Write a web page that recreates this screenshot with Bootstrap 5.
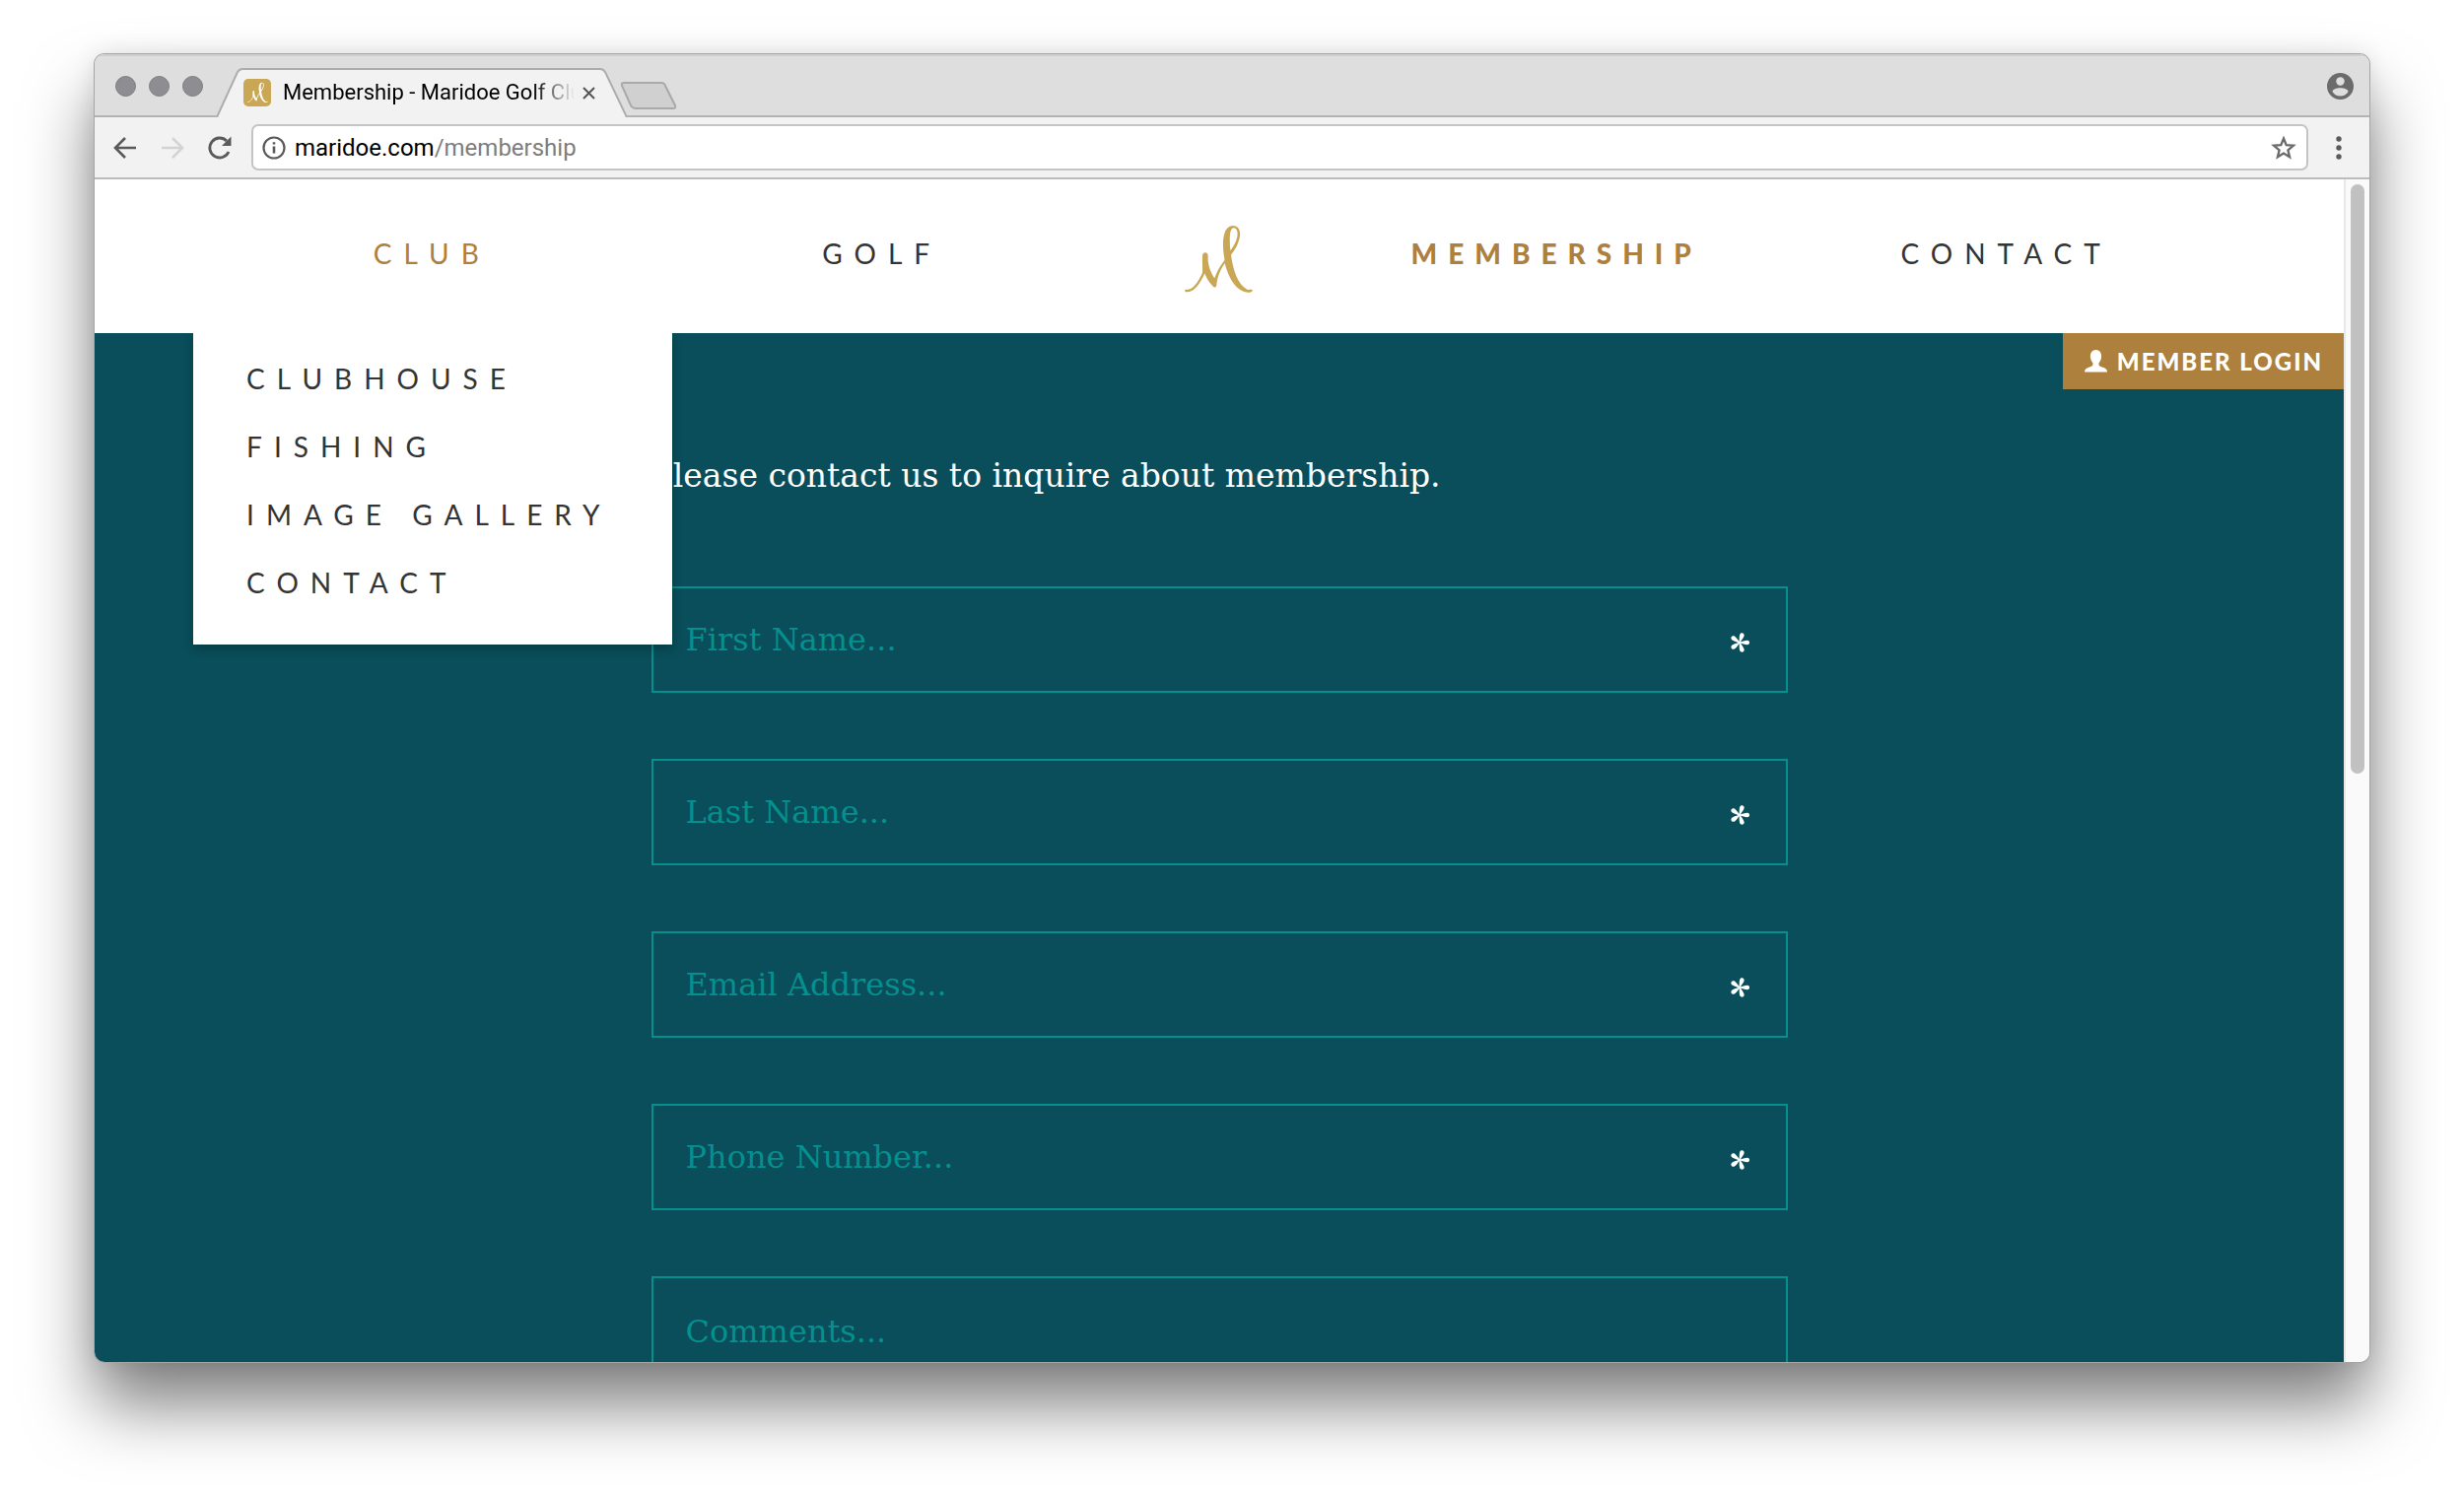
<!DOCTYPE html>
<html lang="en">
<head>
<meta charset="utf-8">
<meta name="viewport" content="width=device-width, initial-scale=1">
<title>Membership - Maridoe Golf Club</title>
<link href="https://cdn.jsdelivr.net/npm/bootstrap@5.3.0/dist/css/bootstrap.min.css" rel="stylesheet">
<style>
  :root { --teal: #094e5a; --aqua: #058f8e; --bronze: #ad803e; --gold: #c9a755; --ink: #333434; }
  body { height: 100vh; padding: 55px 96px 137px; background: #fff; overflow: hidden; }
  .window { border-radius: 10px; overflow: hidden; background: #fff;
    box-shadow: 0 0 0 1px #a6a6a6, 0 44px 68px rgba(0,0,0,.5), 0 0 24px rgba(0,0,0,.1); }
  button { border: 0; background: none; padding: 0; line-height: 0; }
  svg { display: block; }

  /* tab strip */
  .tabstrip { height: 64px; background: #dedede; border-bottom: 2px solid #b3b3b3; padding: 0 16px 0 21px; box-shadow: inset 0 2px 0 #cfcfcf; }
  .lights { gap: 13px; height: 65px; }
  .light { width: 21px; height: 21px; border-radius: 50%; background: #8e8d92; border: 1px solid #7d7c80; }
  .tab-item { width: 416px; height: 50px; margin: 14px 0 0 14px; padding: 0 28px 0 27px; color: #000; text-decoration: none; font: 22px/30px Roboto, sans-serif; }
  .tab-shape { inset: 0; width: 100%; height: 100%; }
  .tab-title { width: 304px; overflow: hidden; white-space: nowrap; -webkit-mask-image: linear-gradient(90deg,#000 86%,transparent); mask-image: linear-gradient(90deg,#000 86%,transparent); }
  .favicon { width: 28px; height: 28px; border-radius: 5px; background: var(--gold); }
  .new-tab { margin: 27px 0 0 -8px; }
  .profile { height: 65px; }

  /* toolbar */
  .toolbar { height: 63px; background: #f2f2f2; border-bottom: 2px solid #bcbcbc; padding: 0 20px 0 18px; }
  .tools { gap: 22px; width: 141px; }
  .address { height: 47px; border: 2px solid #c4c4c4; border-radius: 7px; background: #fff; padding: 0 10px 0 8px; font: 24px/30px Roboto, sans-serif; color: #000; }
  .address-path { color: #7d7d7d; }
  .menu-dots { margin-left: 20px; }

  /* site header */
  .scroll-rail { width: 26px; border-left: 2px solid #e8e8e8; background: #fafafa; padding: 5px 5px 0; }
  .scroll-thumb { height: 50%; border-radius: 7px; background: #c1c1c1; }
  .site-nav { height: 156px; padding: 0 5%; background: #fff; }
  .nav-cell { flex: 0 0 22.222%; height: 100%; }
  .logo-cell { flex: 0 0 11.111%; height: 100%; padding-top: 46px; color: var(--gold); }
  .wide-caps { font: 28px/69px Lato, sans-serif; letter-spacing: 12px; color: var(--ink); text-decoration: none; white-space: nowrap; text-transform: uppercase; }
  .wide-caps:hover { color: var(--bronze); }
  .top-link { display: block; padding-top: 41px; text-align: center; }
  .is-open { color: var(--bronze); }
  .is-current { color: var(--bronze); font-weight: 900; letter-spacing: 11px; }
  .submenu { top: 100%; left: -14px; right: -16px; z-index: 5; background: #fff; padding: 12px 0 28px 54px; box-shadow: 0 4px 10px rgba(0,0,0,.25); clip-path: inset(0 -20px -20px -20px); }

  /* page body */
  .site-body { background: var(--teal); font-family: "DejaVu Serif", serif; }
  .login-link { top: 0; right: 0; height: 57px; padding: 0 21px 0 22px; gap: 10px; background: var(--bronze); color: #fff; text-decoration: none; font: 900 24px/30px Lato, sans-serif; letter-spacing: 2px; }
  .inquiry { width: calc(50% + 12px); padding-top: 120px; }
  .intro { font: 33px/50px "DejaVu Serif", serif; color: #fff; margin: 0 0 87px; white-space: nowrap; }
  .fields { gap: 67px; }
  .field-box { width: 100%; height: 108px; border: 2px solid var(--aqua); border-radius: 0; background: transparent; padding: 0 33px; color: #fff; font: 32px/46px "DejaVu Serif", serif; display: block; outline-offset: 4px; }
  .field-box::placeholder { color: var(--aqua); opacity: 1; }
  textarea.field-box { height: 300px; padding-top: 31px; resize: none; overflow: hidden; }
  .required-mark { right: 38px; top: 46px; }
</style>
<script src="https://cdn.jsdelivr.net/npm/bootstrap@5.3.0/dist/js/bootstrap.bundle.min.js"></script>
</head>
<body>
<svg width="0" height="0" class="position-absolute" aria-hidden="true">
  <defs>
    <symbol id="monogram" viewBox="68 54 210 208">
      <path d="M72 254 C92 257 112 231 127 197" fill="none" stroke="currentColor" stroke-width="7" stroke-linecap="round"/>
      <path d="M122 148 C123 135 138 135 139 147 C137 172 146 198 159 216 C165 198 174 180 190 160 L192 168 C178 187 167 211 165 238 C163 245 156 245 153 239 C142 229 134 214 128 199 L122 208 C123 190 121 168 122 148Z" fill="currentColor"/>
      <path fill-rule="evenodd" d="M189 157 C180 108 184 56 215 56 C235 57 240 76 234 97 C229 116 220 131 209 145 C215 190 229 234 258 250 C263 252 269 249 274 251 C275 257 269 259 262 259 C226 259 199 213 189 165Z M207 132 C204 98 204 63 217 63 C230 64 231 82 226 97 C222 111 214 122 207 132Z" fill="currentColor"/>
    </symbol>
    <symbol id="asterisk" viewBox="-11 -11 22 22">
      <path id="petal" d="M0 -.6 C3 -1 5 -2.300 8 -2.300 C10.800 -1.800 10.800 1.800 8 2.300 C5 2.300 3 1 0 .6Z" fill="#fff"/>
      <use href="#petal" transform="rotate(72)"/><use href="#petal" transform="rotate(144)"/><use href="#petal" transform="rotate(216)"/><use href="#petal" transform="rotate(288)"/>
    </symbol>
  </defs>
</svg>

<div class="window h-100 d-flex flex-column">
  <div class="tabstrip d-flex flex-shrink-0 align-items-start">
    <div class="lights d-flex align-items-center">
      <button class="light" aria-label="Close"></button><button class="light" aria-label="Minimize"></button><button class="light" aria-label="Zoom"></button>
    </div>
    <div class="tab-item position-relative d-flex align-items-center">
      <svg class="tab-shape position-absolute" viewBox="0 0 416 50" preserveAspectRatio="none"><path d="M0 50 L21 4 Q23 1 26 1 H389 Q392 1 394 4 L416 50" fill="#f2f2f2" stroke="#adadad" stroke-width="2"/></svg>
      <span class="favicon position-relative flex-shrink-0 d-flex align-items-center justify-content-center text-white"><svg width="21" height="22"><use href="#monogram"/></svg></span>
      <span class="tab-title position-relative flex-shrink-0 ps-2 ms-1">Membership - Maridoe Golf Club</span>
      <button class="position-relative ms-2" aria-label="Close tab"><svg width="13" height="13" viewBox="0 0 13 13"><path d="M1 1 12 12M12 1 1 12" stroke="#555" stroke-width="2"/></svg></button>
    </div>
    <button class="new-tab" aria-label="New tab"><svg width="60" height="30" viewBox="0 0 60 30"><path d="M5 2 H43 Q46 2 47 5 L57 25 Q58 28 55 28 H17 Q14 28 12 25 L3 5 Q2 2 5 2Z" fill="#d0d0d0" stroke="#a9a9a9" stroke-width="2"/></svg></button>
    <button class="profile ms-auto" aria-label="Profile"><svg width="27" height="27" viewBox="0 0 27 27"><circle cx="13.500" cy="13.500" r="13.500" fill="#6b6b6b"/><circle cx="13.500" cy="8.500" r="4.200" fill="#dedede"/><path d="M5.500 19 C6 14 21 14 21.500 19 C18 25 9 25 5.500 19Z" fill="#dedede"/></svg></button>
  </div>

  <div class="toolbar d-flex flex-shrink-0 align-items-center">
    <div class="tools d-flex align-items-center flex-shrink-0">
      <button aria-label="Back"><svg width="26" height="26" viewBox="0 0 26 26"><path d="M24 13H4M13 3 3 13 13 23" fill="none" stroke="#5a5a5a" stroke-width="2.600"/></svg></button>
      <button aria-label="Forward" disabled><svg width="26" height="26" viewBox="0 0 26 26"><path d="M2 13H22M13 3 23 13 13 23" fill="none" stroke="#d3d3d3" stroke-width="2.600"/></svg></button>
      <button aria-label="Reload"><svg width="26" height="26" viewBox="0 0 26 26"><path d="M22 17 A10 10 0 1 1 20 6" fill="none" stroke="#5a5a5a" stroke-width="2.800"/><path d="M24.500 1.500V11H15Z" fill="#5a5a5a"/></svg></button>
    </div>
    <div class="address d-flex align-items-center flex-grow-1">
      <button class="me-2" aria-label="Site information"><svg width="26" height="26" viewBox="0 0 26 26"><circle cx="13" cy="13" r="10.500" fill="none" stroke="#5a5a5a" stroke-width="2.200"/><path d="M13 11.500V18.500M13 7.200V9.600" stroke="#5a5a5a" stroke-width="2.600"/></svg></button>
      <span>maridoe.com<span class="address-path">/membership</span></span>
      <button class="ms-auto" aria-label="Bookmark this page"><svg width="26" height="26" viewBox="0 0 26 26"><path d="M13 3.500 15.700 10.200 22.900 10.700 17.400 15.300 19.100 22.300 13 18.500 6.900 22.300 8.600 15.300 3.100 10.700 10.300 10.200Z" fill="none" stroke="#6a6a6a" stroke-width="2.300"/></svg></button>
    </div>
    <button class="menu-dots" aria-label="Browser menu"><svg width="22" height="26" viewBox="0 0 22 26"><g fill="#5a5a5a"><circle cx="11" cy="4" r="2.700"/><circle cx="11" cy="13" r="2.700"/><circle cx="11" cy="22" r="2.700"/></g></svg></button>
  </div>

  <div class="d-flex flex-grow-1 overflow-hidden">
    <div class="d-flex flex-column flex-grow-1 overflow-hidden">
      <nav class="site-nav d-flex flex-shrink-0">
        <div class="nav-cell position-relative">
          <a class="wide-caps top-link is-open" href="#club" aria-expanded="true">Club</a>
          <div class="submenu position-absolute d-flex flex-column">
            <a class="wide-caps" href="#clubhouse">Clubhouse</a>
            <a class="wide-caps" href="#fishing">Fishing</a>
            <a class="wide-caps" href="#gallery">Image Gallery</a>
            <a class="wide-caps" href="#contact">Contact</a>
          </div>
        </div>
        <div class="nav-cell"><a class="wide-caps top-link" href="#golf">Golf</a></div>
        <a class="logo-cell d-flex justify-content-center" href="#home" aria-label="Maridoe home"><svg width="70" height="70"><use href="#monogram"/></svg></a>
        <div class="nav-cell"><a class="wide-caps top-link is-current" href="#membership">Membership</a></div>
        <div class="nav-cell"><a class="wide-caps top-link" href="#contact-us">Contact</a></div>
      </nav>

      <main class="site-body position-relative flex-grow-1 overflow-hidden">
        <a class="login-link position-absolute d-flex align-items-center" href="#login"><svg width="23" height="23" viewBox="0 0 23 23"><path d="M11.500 0 C16 0 17.500 4 17 8 C16.600 11 15 12.500 14.500 13.500 C14.300 16 15 16.500 18 17.500 C21 18.500 23 19.500 23 22.500 H0 C0 19.500 2 18.500 5 17.500 C8 16.500 8.700 16 8.500 13.500 C8 12.500 6.400 11 6 8 C5.500 4 7 0 11.500 0Z" fill="#fff"/></svg>MEMBER LOGIN</a>
        <form class="inquiry mx-auto">
          <p class="intro">Please contact us to inquire about membership.</p>
          <div class="fields d-flex flex-column">
            <div class="position-relative"><label class="visually-hidden" for="first">First Name</label><input class="field-box" id="first" type="text" placeholder="First Name..." required><svg class="required-mark position-absolute" width="22" height="22"><use href="#asterisk"/></svg></div>
            <div class="position-relative"><label class="visually-hidden" for="last">Last Name</label><input class="field-box" id="last" type="text" placeholder="Last Name..." required><svg class="required-mark position-absolute" width="22" height="22"><use href="#asterisk"/></svg></div>
            <div class="position-relative"><label class="visually-hidden" for="email">Email Address</label><input class="field-box" id="email" type="email" placeholder="Email Address..." required><svg class="required-mark position-absolute" width="22" height="22"><use href="#asterisk"/></svg></div>
            <div class="position-relative"><label class="visually-hidden" for="phone">Phone Number</label><input class="field-box" id="phone" type="tel" placeholder="Phone Number..." required><svg class="required-mark position-absolute" width="22" height="22"><use href="#asterisk"/></svg></div>
            <div class="position-relative"><label class="visually-hidden" for="comments">Comments</label><textarea class="field-box" id="comments" placeholder="Comments..."></textarea></div>
          </div>
        </form>
      </main>
    </div>
    <div class="scroll-rail flex-shrink-0"><div class="scroll-thumb"></div></div>
  </div>
</div>
</body>
</html>
